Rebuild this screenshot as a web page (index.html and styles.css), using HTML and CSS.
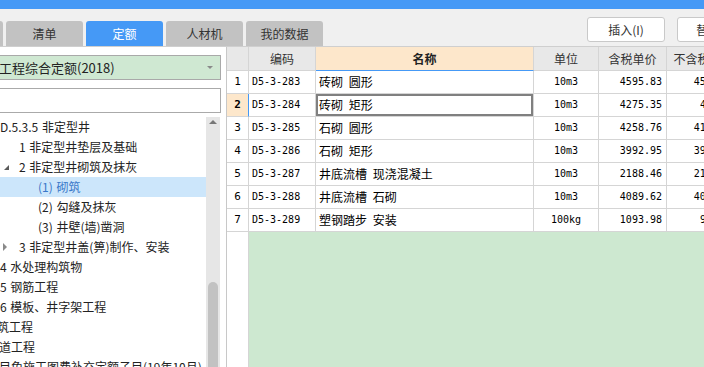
FILE: index.html
```html
<!DOCTYPE html>
<html lang="zh-CN">
<head>
  <meta charset="UTF-8" />
  <title>定额</title>
  <link rel="stylesheet" href="styles.css">
</head>
<body>
  <div class="titlebar"></div>

  <div class="toolbar">
    <div class="tabs">
      <div class="tab"></div>
      <div class="tab">清单</div>
      <div class="tab active">定额</div>
      <div class="tab">人材机</div>
      <div class="tab">我的数据</div>
    </div>
    <div class="actions">
      <button class="btn">插入(I)</button>
      <button class="btn">替换(R)</button>
    </div>
  </div>

  <div class="main">
    <div class="side">
      <div class="select">
        <span class="select-text">工程综合定额(2018)</span>
        <span class="caret"></span>
      </div>
      <div class="search"></div>

      <div class="tree-wrap">
        <ul class="tree">
          <li class="lv0">D.5.3.5 非定型井</li>
          <li class="lv1"><span class="tw"></span>1 非定型井垫层及基础</li>
          <li class="lv1"><span class="tw"><i class="open"></i></span>2 非定型井砌筑及抹灰</li>
          <li class="lv2 selected">(1) 砌筑</li>
          <li class="lv2">(2) 勾缝及抹灰</li>
          <li class="lv2">(3) 井壁(墙)凿洞</li>
          <li class="lv1"><span class="tw"><i class="closed"></i></span>3 非定型井盖(箅)制作、安装</li>
          <li class="lv0">4 水处理构筑物</li>
          <li class="lv0">5 钢筋工程</li>
          <li class="lv0">6 模板、井字架工程</li>
          <li class="lv0"><span class="cut1">砌筑工程</span></li>
          <li class="lv0"><span class="cut2">管道工程</span></li>
          <li class="lv0"><span class="cut3">项目免施工图费补充定额子目(19年10月)</span></li>
        </ul>
        <div class="vscroll">
          <span class="up"></span>
          <span class="thumb"></span>
        </div>
      </div>
    </div>

    <div class="grid">
      <div class="row head">
        <div class="cell num"></div>
        <div class="cell">编码</div>
        <div class="cell name-head">名称</div>
        <div class="cell">单位</div>
        <div class="cell">含税单价</div>
        <div class="cell">不含税单价</div>
      </div>
      <div class="row">
        <div class="cell num">1</div>
        <div class="cell code">D5-3-283</div>
        <div class="cell name">砖砌 圆形</div>
        <div class="cell unit">10m3</div>
        <div class="cell price">4595.83</div>
        <div class="cell price">4507.46</div>
      </div>
      <div class="row current">
        <div class="cell num">2</div>
        <div class="cell code">D5-3-284</div>
        <div class="cell name focus">砖砌 矩形</div>
        <div class="cell unit">10m3</div>
        <div class="cell price">4275.35</div>
        <div class="cell price">4197.5</div>
      </div>
      <div class="row">
        <div class="cell num">3</div>
        <div class="cell code">D5-3-285</div>
        <div class="cell name">石砌 圆形</div>
        <div class="cell unit">10m3</div>
        <div class="cell price">4258.76</div>
        <div class="cell price">4173.59</div>
      </div>
      <div class="row">
        <div class="cell num">4</div>
        <div class="cell code">D5-3-286</div>
        <div class="cell name">石砌 矩形</div>
        <div class="cell unit">10m3</div>
        <div class="cell price">3992.95</div>
        <div class="cell price">3914.68</div>
      </div>
      <div class="row">
        <div class="cell num">5</div>
        <div class="cell code">D5-3-287</div>
        <div class="cell name">井底流槽 现浇混凝土</div>
        <div class="cell unit">10m3</div>
        <div class="cell price">2188.46</div>
        <div class="cell price">2143.71</div>
      </div>
      <div class="row">
        <div class="cell num">6</div>
        <div class="cell code">D5-3-288</div>
        <div class="cell name">井底流槽 石砌</div>
        <div class="cell unit">10m3</div>
        <div class="cell price">4089.62</div>
        <div class="cell price">4009.12</div>
      </div>
      <div class="row">
        <div class="cell num">7</div>
        <div class="cell code">D5-3-289</div>
        <div class="cell name">塑钢踏步 安装</div>
        <div class="cell unit">100kg</div>
        <div class="cell price">1093.98</div>
        <div class="cell price">967.14</div>
      </div>
      <div class="filler">
        <div class="filler-num"></div>
        <div class="filler-body"></div>
      </div>
    </div>
  </div>
</body>
</html>
```

FILE: styles.css
```css
/* Page */
body {
  margin: 0;
  width: 704px;
  height: 367px;
  overflow: hidden;
  background: #f0f0f0;
  font-family: "Noto Sans CJK SC", "Noto Sans", sans-serif;
  font-size: 12px;
  color: #222;
}
.titlebar {
  height: 9px;
  background: #4599f6;
}

/* Toolbar with tabs and buttons */
.toolbar {
  display: flex;
  align-items: flex-start;
  height: 37px;
}
.tabs {
  display: flex;
  gap: 3px;
  margin-top: 12px;
  margin-left: -74px;
}
.tab {
  width: 77px;
  height: 25px;
  line-height: 25px;
  text-align: center;
  background: #c2c2c2;
  color: #333;
  border-radius: 3px 3px 0 0;
}
.tab.active {
  background: #4599f6;
  color: #fff;
}
.actions {
  display: flex;
  gap: 12px;
  margin-top: 8px;
  margin-left: auto;
  margin-right: -51px;
}
.btn {
  width: 78px;
  height: 25px;
  padding: 0;
  background: #fff;
  border: 1px solid #c9c9c9;
  border-radius: 3px;
  font-family: inherit;
  font-size: 12px;
  color: #333;
}

/* Main area */
.main {
  display: flex;
  height: 320px;
  border-top: 1px solid #cfcfcf;
}
.side {
  box-sizing: border-box;
  width: 227px;
  padding-top: 8px;
  background: #fff;
  border-right: 1px solid #c8c8c8;
  display: flex;
  flex-direction: column;
}
.select {
  box-sizing: border-box;
  display: flex;
  align-items: center;
  width: 221px;
  height: 25px;
  background: #cfe8d2;
  border: 1px solid #a9a9a9;
  border-left: none;
}
.select-text {
  font-size: 13px;
  margin-left: -1px;
  color: #222;
}
.caret {
  margin-left: auto;
  margin-right: 7px;
  border-top: 3px solid #8a8a8a;
  border-left: 3px solid transparent;
  border-right: 3px solid transparent;
}
.search {
  box-sizing: border-box;
  width: 221px;
  height: 25px;
  margin-top: 8px;
  background: #fff;
  border: 1px solid #aaa;
  border-left: none;
}

/* Tree */
.tree-wrap {
  display: flex;
  flex: 1;
  margin-top: 4px;
  overflow: hidden;
}
.tree {
  list-style: none;
  margin: 0;
  padding: 0;
  width: 206px;
  overflow: hidden;
  word-spacing: 1px;
}
.tree li {
  display: flex;
  align-items: center;
  height: 20px;
  line-height: 20px;
  white-space: nowrap;
}
.tree .lv0 { padding-left: 0; }
.tree .lv2 { padding-left: 38px; }
.tree .selected {
  background: #cce6fb;
  color: #3a78c9;
}
.tw {
  display: flex;
  align-items: center;
  width: 19px;
  flex-shrink: 0;
}
.tw .open {
  margin-left: 4px;
  margin-top: 1px;
  border-bottom: 5px solid #5a5a5a;
  border-left: 5px solid transparent;
}
.tw .closed {
  margin-left: 3px;
  border-left: 4px solid #8a8a8a;
  border-top: 4px solid transparent;
  border-bottom: 4px solid transparent;
}
.cut1 { margin-left: -15px; }
.cut2 { margin-left: -13px; }
.cut3 { margin-left: -13px; }

.vscroll {
  display: flex;
  flex-direction: column;
  align-items: center;
  width: 14px;
  background: #e6e6e6;
  overflow: hidden;
}
.vscroll .up {
  margin-top: 3px;
  border-bottom: 4px solid #777;
  border-left: 4px solid transparent;
  border-right: 4px solid transparent;
}
.vscroll .thumb {
  flex-shrink: 0;
  width: 10px;
  height: 110px;
  margin-top: 158px;
  background: #c2c2c2;
  border-radius: 5px;
}

/* Grid */
.grid {
  flex: 1;
  display: flex;
  flex-direction: column;
  background: #fff;
  overflow: hidden;
}
.row {
  display: grid;
  grid-template-columns: 22px 67px 218px 65px 68px 74px;
  height: 23px;
  flex-shrink: 0;
}
.cell {
  box-sizing: border-box;
  border-right: 1px solid #d5d5d5;
  border-bottom: 1px solid #d5d5d5;
  line-height: 22px;
  white-space: nowrap;
  overflow: hidden;
  color: #000;
}
.row.head {
  height: 24px;
}
.head .cell {
  background: #e8e8e8;
  text-align: center;
  line-height: 23px;
  color: #333;
}
.head .name-head {
  background: #fde7cb;
  font-weight: bold;
  color: #222;
  border-bottom-color: #4599f6;
}
.num {
  text-align: center;
  font-family: "DejaVu Sans Mono", monospace;
  font-size: 11px;
}
.current .num {
  background: #fde7cb;
  font-weight: bold;
  border-right-color: #4599f6;
}
.code {
  padding-left: 3px;
  font-family: "DejaVu Sans Mono", monospace;
  font-size: 10px;
}
.name {
  padding-left: 3px;
  word-spacing: 3px;
}
.name.focus {
  box-shadow: inset 0 0 0 2px #808080;
}
.unit {
  text-align: center;
  font-family: "DejaVu Sans Mono", monospace;
  font-size: 10px;
}
.price {
  text-align: right;
  padding-right: 4px;
  font-family: "DejaVu Sans Mono", monospace;
  font-size: 10px;
}

.filler {
  flex: 1;
  display: grid;
  grid-template-columns: 22px 1fr;
}
.filler-num {
  border-right: 1px solid #d5d5d5;
  background: #fff;
}
.filler-body {
  background: #cde8d0;
}
```
